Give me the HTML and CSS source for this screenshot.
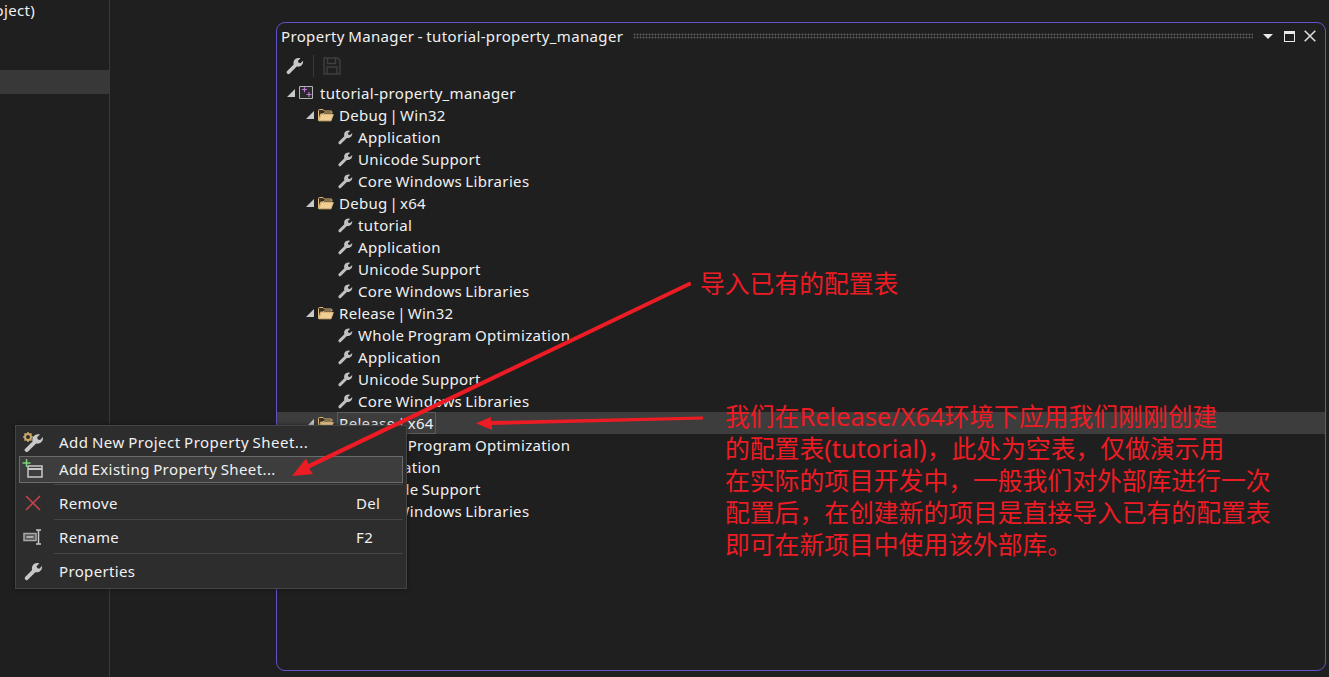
FILE: index.html
```html
<!DOCTYPE html>
<html lang="en">
<head>
<meta charset="utf-8">
<title>Property Manager</title>
<link rel="stylesheet" href="styles.css">
</head>
<body>
<svg class="defs" width="0" height="0">
  <defs>
    <symbol id="wrench" viewBox="0 0 16 16">
      <path d="M1.500 13 7.300 7.200C6.600 4.400 8.300 1.600 11.400 1.600c.6 0 1.100.1 1.600.3L10.800 4.200l.7 1.500 1.500.4L15.200 4c.4 2.900-1.800 5.600-5.300 4.900L3.800 15q-.9.8-1.800 0-1-.9-.5-2Z" fill="currentColor"/>
    </symbol>
    <symbol id="folder" viewBox="0 0 16 14">
      <path d="M.5 12.500V2.500q0-1 1-1h3.500l1.500 1.500h6.500q1 0 1 1v1h-8l-1 1H2.500L1 12.500Z" fill="#3a3020" stroke="#dcb67a"/>
      <path d="M1 12.800 3 6.500h12.300l-2.300 6.300Z" fill="#f0cf95" stroke="#dcb67a" stroke-linejoin="round"/>
    </symbol>
  </defs>
</svg>

<aside class="side">
  <div class="side-text">(Project)</div>
  <div class="side-selected"></div>
</aside>

<section class="window">
  <header class="titlebar">
    <span class="title">Property Manager - tutorial-property_manager</span>
    <span class="grip"></span>
    <svg class="tb-btn tb-drop" width="10" height="5" viewBox="0 0 10 5"><path d="M0 0h10L5 5Z" fill="#e8e8e8"/></svg>
    <svg class="tb-btn tb-max" width="11" height="11" viewBox="0 0 11 11"><path d="M0 0h11v11H0Z" fill="#e8e8e8"/><path d="M1 3h9v7H1Z" fill="#1f1f1f"/></svg>
    <svg class="tb-btn tb-close" width="12" height="12" viewBox="0 0 12 12"><path d="m.7.7 10.600 10.600M11.300.7.7 11.300" stroke="#e0e0e0" stroke-width="1.500" fill="none"/></svg>
  </header>
  <div class="toolbar">
    <svg class="tool-wrench" width="19" height="19"><use href="#wrench"/></svg>
    <span class="tool-sep"></span>
    <svg class="tool-save" width="18" height="18" viewBox="0 0 18 18"><path d="M1 1h13.500L17 3.500V17H1Z M4.500 1v5.500h8V1M4 17v-7h10v7" fill="none" stroke="currentColor" stroke-width="1.500"/></svg>
  </div>
  <div class="tree">
    <div class="row lv0"><i class="tri"></i>
      <svg class="proj" width="15" height="14" viewBox="0 0 15 14"><path d="M.5.500h13v12H.5Z" fill="#2a2a2a" stroke="#b4b4b4"/><path d="M3 3.500h5M5.500 1.200v5M7.500 8.500h5M10 6v5" stroke="#c678dd" stroke-width="1.100"/></svg>
      <span>tutorial-property_manager</span></div>

    <div class="row lv1"><i class="tri"></i><svg class="fld" width="16" height="14"><use href="#folder"/></svg><span>Debug | Win32</span></div>
    <div class="row lv2"><svg class="wr" width="16" height="16"><use href="#wrench"/></svg><span>Application</span></div>
    <div class="row lv2"><svg class="wr" width="16" height="16"><use href="#wrench"/></svg><span>Unicode Support</span></div>
    <div class="row lv2"><svg class="wr" width="16" height="16"><use href="#wrench"/></svg><span>Core Windows Libraries</span></div>

    <div class="row lv1"><i class="tri"></i><svg class="fld" width="16" height="14"><use href="#folder"/></svg><span>Debug | x64</span></div>
    <div class="row lv2"><svg class="wr" width="16" height="16"><use href="#wrench"/></svg><span>tutorial</span></div>
    <div class="row lv2"><svg class="wr" width="16" height="16"><use href="#wrench"/></svg><span>Application</span></div>
    <div class="row lv2"><svg class="wr" width="16" height="16"><use href="#wrench"/></svg><span>Unicode Support</span></div>
    <div class="row lv2"><svg class="wr" width="16" height="16"><use href="#wrench"/></svg><span>Core Windows Libraries</span></div>

    <div class="row lv1"><i class="tri"></i><svg class="fld" width="16" height="14"><use href="#folder"/></svg><span>Release | Win32</span></div>
    <div class="row lv2"><svg class="wr" width="16" height="16"><use href="#wrench"/></svg><span>Whole Program Optimization</span></div>
    <div class="row lv2"><svg class="wr" width="16" height="16"><use href="#wrench"/></svg><span>Application</span></div>
    <div class="row lv2"><svg class="wr" width="16" height="16"><use href="#wrench"/></svg><span>Unicode Support</span></div>
    <div class="row lv2"><svg class="wr" width="16" height="16"><use href="#wrench"/></svg><span>Core Windows Libraries</span></div>

    <div class="row lv1 selected"><i class="tri"></i><svg class="fld" width="16" height="14"><use href="#folder"/></svg><span class="focus">Release | x64</span></div>
    <div class="row lv2"><svg class="wr" width="16" height="16"><use href="#wrench"/></svg><span>Whole Program Optimization</span></div>
    <div class="row lv2"><svg class="wr" width="16" height="16"><use href="#wrench"/></svg><span>Application</span></div>
    <div class="row lv2"><svg class="wr" width="16" height="16"><use href="#wrench"/></svg><span>Unicode Support</span></div>
    <div class="row lv2"><svg class="wr" width="16" height="16"><use href="#wrench"/></svg><span>Core Windows Libraries</span></div>
  </div>
</section>

<nav class="menu">
  <div class="item small">
    <span class="ico">
      <svg width="22" height="22" viewBox="0 0 22 22"><g><circle cx="6" cy="6" r="3" fill="none" stroke="#c9a86a" stroke-width="2"/><path d="M6 1v2M6 9v2M1 6h2M9 6h2M2.500 2.500l1.500 1.500M8 8l1.500 1.500M2.500 9.500 4 8M8 4l1.500-1.500" stroke="#c9a86a" stroke-width="1.500"/></g><path d="M2.500 18.500 10.500 10.500C9.700 7 11.800 3.200 16 3.200c.8 0 1.400.1 2 .4l-3 3 1 2 2 .5 3-3c.5 4-2.500 7.300-6.800 6.400L6 20.500q-1.200 1-2.400 0-1.400-1-1.100-2Z" fill="#c8c8c8"/></svg>
    </span>
    <span class="label wide">Add New Project Property Sheet...</span>
  </div>
  <div class="item small active">
    <span class="ico">
      <svg width="22" height="22" viewBox="0 0 22 22"><path d="M6 8h14v11H6Z" fill="#3d3d3d" stroke="#c8c8c8" stroke-width="1.500"/><path d="M6 11h14" stroke="#c8c8c8" stroke-width="2"/><path d="M4.500 1v8M.5 5h8" stroke="#7ed37e" stroke-width="1.500"/></svg>
    </span>
    <span class="label wider">Add Existing Property Sheet...</span>
  </div>
  <div class="item tall first">
    <span class="ico"><svg width="16" height="16" viewBox="0 0 16 16"><path d="m1 1 14 14M15 1 1 15" stroke="#c8444c" stroke-width="1.500" fill="none"/></svg></span>
    <span class="label">Remove</span><span class="key">Del</span>
  </div>
  <div class="item tall">
    <span class="ico"><svg width="20" height="16" viewBox="0 0 20 16"><path d="M1 4.500h12v7H1Z" fill="#5a5a5a" stroke="#a8a8a8" stroke-width="1.500"/><path d="M3.500 8h7" stroke="#c8c8c8" stroke-width="1.500"/><path d="M13 1h5M13 15h5M15.500 1v14" stroke="#c8c8c8" stroke-width="1.500" fill="none"/></svg></span>
    <span class="label">Rename</span><span class="key">F2</span>
  </div>
  <div class="item tall last">
    <span class="ico"><svg width="20" height="20"><use href="#wrench"/></svg></span>
    <span class="label">Properties</span>
  </div>
</nav>

<svg class="arrows" width="1329" height="677" viewBox="0 0 1329 677">
  <path d="M690 281.500 691.500 285 309 468.500 313 474 292 476 306 458.500 308.500 464Z" fill="#ed1c24"/>
  <path d="M703 416.500 703 419.500 492 425 492 430 476 423.300 491 417 491 421Z" fill="#ed1c24"/>
</svg>

<p class="note note-a">导入已有的配置表</p>
<div class="note note-b">
  <p>我们在<span class="latin">Release/X64</span>环境下应用我们刚刚创建</p>
  <p>的配置表<span class="latin">(tutorial)</span>，此处为空表，仅做演示用</p>
  <p>在实际的项目开发中，一般我们对外部库进行一次</p>
  <p>配置后，在创建新的项目是直接导入已有的配置表</p>
  <p>即可在新项目中使用该外部库。</p>
</div>
</body>
</html>
```
FILE: styles.css
```css
* { box-sizing: border-box; }
html, body { margin: 0; height: 100%; }
body {
  position: relative;
  width: 1329px;
  height: 677px;
  overflow: hidden;
  background: #1f1f1f;
  color: #f1f1f1;
  font: 15px/22px "Noto Sans", "Noto Sans CJK SC", sans-serif;
  letter-spacing: .35px;
  word-spacing: -1px;
}
.defs { position: absolute; }

/* left panel */
.side {
  width: 110px;
  height: 677px;
  border-right: 1px solid #393939;
  overflow: hidden;
}
.side-text { margin-left: -26px; height: 70px; line-height: 20px; white-space: nowrap; }
.side-selected { height: 24px; background: #383838; }

/* tool window */
.window {
  position: absolute;
  left: 276px;
  top: 22px;
  width: 1050px;
  height: 649px;
  border: 1px solid #6353c8;
  border-radius: 9px;
  background: #1f1f1f;
  overflow: hidden;
}
.titlebar {
  display: flex;
  align-items: center;
  height: 26px;
  padding: 0 9px 0 4px;
}
.title { white-space: nowrap; word-spacing: -.8px; }
.grip {
  flex: 1;
  height: 6px;
  margin: 0 10px;
  background-image: radial-gradient(#5a5a5a 0.9px, transparent 1.1px);
  background-size: 3px 3px;
}
.tb-btn { flex: none; }
.tb-max { margin: 0 9px 0 11px; }

.toolbar {
  display: flex;
  align-items: center;
  height: 33px;
  padding-left: 8px;
}
.tool-wrench { color: #c8c8c8; }
.tool-sep { width: 1px; height: 22px; margin: 0 9px; background: #3a3a3a; }
.tool-save { color: #3f3f3f; }

.tree { display: flex; flex-direction: column; }
.row { display: flex; align-items: center; height: 22px; white-space: nowrap; }
.lv0 { padding-left: 10px; letter-spacing: .3px; }
.lv1 { padding-left: 29px; word-spacing: -2.300px; letter-spacing: .3px; }
.lv2 { padding-left: 60px; }
.tri {
  width: 0;
  height: 0;
  border-left: 8px solid transparent;
  border-bottom: 8px solid #c8c8c8;
  margin-right: 4px;
}
.proj { margin-right: 6px; }
.fld { margin-right: 5px; }
.wr { margin-right: 5px; color: #c0c0c0; }
.selected { background: #3d3d3d; }
.focus { border: 1px solid #5c5c5c; padding: 0 1px; height: 22px; line-height: 20px; margin-left: -2px; }

/* context menu */
.menu {
  position: absolute;
  left: 15px;
  top: 425px;
  width: 392px;
  height: 164px;
  padding: 3px 3px 0;
  background: #2d2d2d;
  border: 1px solid #454545;
  box-shadow: 0 0 4px rgba(0, 0, 0, .5);
}
.item { display: flex; align-items: center; position: relative; color: #f1f1f1; }
.small { height: 27px; padding-bottom: 2px; }
.tall { height: 34px; }
.tall::after {
  content: "";
  position: absolute;
  left: 35px;
  right: 0;
  bottom: 0;
  height: 1px;
  background: #454545;
}
.last::after { display: none; }
.first { margin-top: 3px; }
.first::before {
  content: "";
  position: absolute;
  left: 35px;
  right: 0;
  top: -2px;
  height: 1px;
  background: #454545;
}
.active { background: #3d3d3d; box-shadow: inset 0 0 0 1px #6a6a6a; }
.ico { width: 28px; margin-right: 12px; display: flex; justify-content: center; flex: none; color: #c8c8c8; }
.label { flex: 1; white-space: nowrap; }
.wide { letter-spacing: .5px; }
.wider { letter-spacing: .4px; }
.key { width: 47px; white-space: nowrap; }

/* annotation */
.arrows { position: absolute; left: 0; top: 0; pointer-events: none; }
.note {
  position: absolute;
  margin: 0;
  color: #ed1c24;
  font-size: 24.800px;
  line-height: 32px;
  letter-spacing: 0;
  word-spacing: 0;
  white-space: nowrap;
}
.note p { margin: 0; }
.latin { font-size: 25.400px; line-height: 0; }
.note-a { left: 700px; top: 267px; }
.note-b { left: 725px; top: 400px; }
```
